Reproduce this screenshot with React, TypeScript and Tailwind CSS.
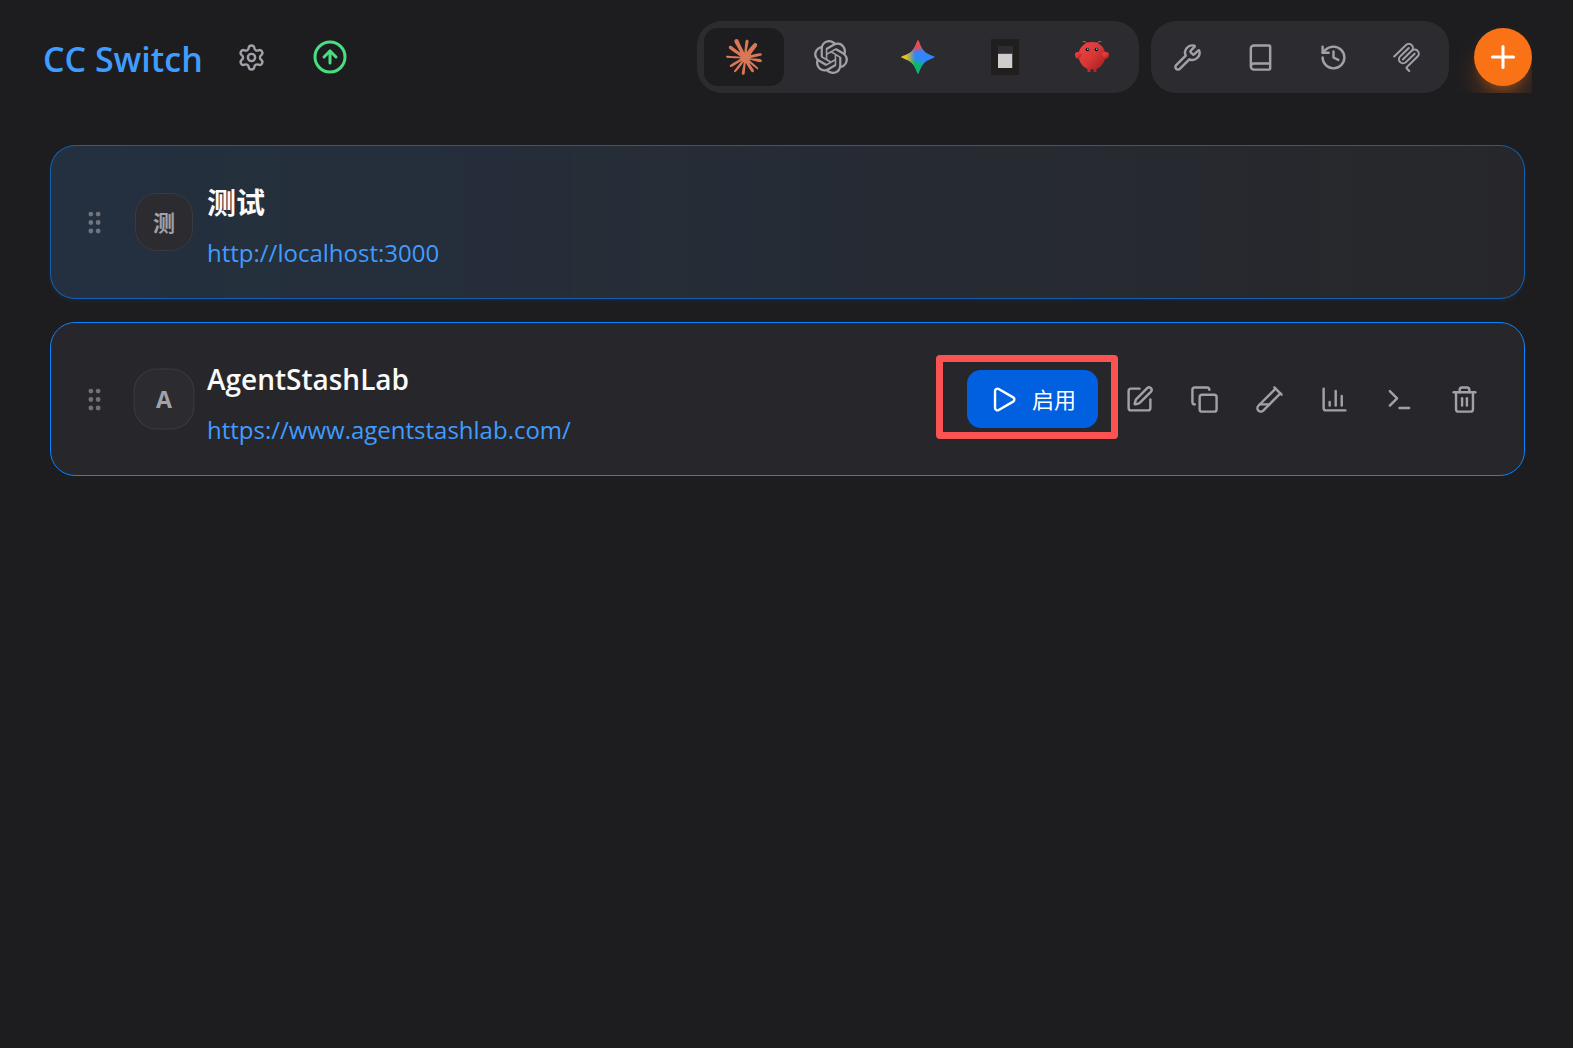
import React, { FC, ReactNode } from "react";
import clsx from "clsx";
import {
  Book,
  ChartColumn,
  CircleArrowUp,
  Copy,
  GripVertical,
  History,
  Play,
  Plus,
  Settings,
  SquarePen,
  Terminal,
  TestTubeDiagonal,
  Trash2,
  Wrench,
} from "lucide-react";
import { SiClaude, SiOpenai } from "react-icons/si";

const GeminiIcon: FC = () => (
  <svg width={34} height={34} viewBox="0 0 24 24">
    <defs>
      <linearGradient id="gem-red" x1="11" y1="0" x2="13" y2="9" gradientUnits="userSpaceOnUse">
        <stop offset="0.45" stopColor="#f94543" />
        <stop offset="1" stopColor="#f94543" stopOpacity="0" />
      </linearGradient>
      <linearGradient id="gem-yellow" x1="0" y1="12" x2="11" y2="12" gradientUnits="userSpaceOnUse">
        <stop offset="0.3" stopColor="#fabc12" />
        <stop offset="0.9" stopColor="#fabc12" stopOpacity="0" />
      </linearGradient>
      <linearGradient id="gem-green" x1="9" y1="23" x2="13" y2="13" gradientUnits="userSpaceOnUse">
        <stop offset="0.5" stopColor="#08b962" />
        <stop offset="1" stopColor="#08b962" stopOpacity="0" />
      </linearGradient>
    </defs>
    {["#3186ff", "url(#gem-green)", "url(#gem-red)", "url(#gem-yellow)"].map((fill) => (
      <path
        key={fill}
        fill={fill}
        d="M12 .2C12.8.2 13.4 4.8 16.300 7.700C19.200 10.600 23.800 11.200 23.800 12S19.200 13.400 16.300 16.300C13.400 19.200 12.800 23.800 12 23.800S10.600 19.200 7.700 16.300C4.800 13.400.2 12.800.2 12S4.800 10.600 7.700 7.700C10.600 4.800 11.200.2 12 .2z"
      />
    ))}
  </svg>
);

const OpenCodeIcon: FC = () => (
  <svg width={28} height={36} viewBox="0 0 28 36">
    <path fill="#211e1e" d="M0 0h28v36H0z" />
    <path fill="#2d2c31" d="M7 7h15v22H7z" />
    <path fill="#4b494d" d="M7 14h15v15H7z" />
    <path fill="#cfcecd" d="M7 15h14v14H7z" />
  </svg>
);

const OpenClawIcon: FC = () => (
  <svg width={36} height={36} viewBox="0 0 120 120" fill="none">
    <defs>
      <linearGradient id="claw" x1="0" y1="0" x2="1" y2="1">
        <stop stopColor="#f04444" />
        <stop offset="0.5" stopColor="#d93636" />
        <stop offset="1" stopColor="#991b1b" />
      </linearGradient>
    </defs>
    <path
      fill="url(#claw)"
      d="M60 10C30 10 15 35 15 55s15 40 30 45v10h10v-10s5 2 10 0v10h10v-10c15-5 30-25 30-45S90 10 60 10z"
    />
    <path fill="url(#claw)" d="M20 45C5 40 0 50 5 60s15 5 20-5c3-7 0-10-5-10z" />
    <path fill="url(#claw)" d="M100 45c15-5 20 5 15 15s-15 5-20-5c-3-7 0-10 5-10z" />
    <path stroke="#ff4d4d" strokeWidth={3} strokeLinecap="round" d="M45 15Q35 5 30 8M75 15q10-10 15-7" />
    <circle cx={45} cy={35} r={6} fill="#050810" />
    <circle cx={75} cy={35} r={6} fill="#050810" />
    <circle cx={46} cy={34} r={3} fill="#00e5cc" />
    <circle cx={76} cy={34} r={3} fill="#00e5cc" />
  </svg>
);

const McpIcon: FC = () => (
  <svg width={29} height={29} viewBox="0 0 24 24" fill="currentColor" fillRule="evenodd">
    <path d="M15.688 2.343a2.588 2.588 0 00-3.61 0l-9.626 9.44a.863.863 0 01-1.203 0 .823.823 0 010-1.18l9.626-9.44a4.313 4.313 0 016.016 0 4.116 4.116 0 011.204 3.54 4.3 4.3 0 013.609 1.18l.05.05a4.115 4.115 0 010 5.9l-8.706 8.537a.274.274 0 000 .393l1.788 1.754a.823.823 0 010 1.18.863.863 0 01-1.203 0l-1.788-1.753a1.92 1.92 0 010-2.754l8.706-8.538a2.47 2.47 0 000-3.54l-.05-.049a2.588 2.588 0 00-3.607-.003l-7.172 7.034-.002.002-.098.097a.863.863 0 01-1.204 0 .823.823 0 010-1.18l7.273-7.133a2.47 2.47 0 00-.003-3.537z" />
    <path d="M14.485 4.703a.823.823 0 000-1.18.863.863 0 00-1.204 0l-7.119 6.982a4.115 4.115 0 000 5.9 4.314 4.314 0 006.016 0l7.12-6.982a.823.823 0 000-1.18.863.863 0 00-1.204 0l-7.119 6.982a2.588 2.588 0 01-3.61 0 2.47 2.47 0 010-3.54l7.12-6.982z" />
  </svg>
);

interface IconButtonProps {
  label: string;
  children: ReactNode;
}

const IconButton: FC<IconButtonProps> = ({ label, children }) => (
  <button
    type="button"
    aria-label={label}
    className="flex h-[58px] w-[58px] shrink-0 items-center justify-center rounded-[14px] text-[#a1a1aa]"
  >
    {children}
  </button>
);

const apps = [
  { name: "Claude", icon: <SiClaude size={36} color="#d97757" /> },
  { name: "Codex", icon: <SiOpenai size={34} /> },
  { name: "Gemini", icon: <GeminiIcon /> },
  { name: "OpenCode", icon: <OpenCodeIcon /> },
  { name: "OpenClaw", icon: <OpenClawIcon /> },
];

const Header: FC = () => {
  return (
    <header className="flex h-[114px] items-center justify-between pl-[43px] pr-[41px]">
      <div className="flex items-center gap-5">
        <h1 className="pt-1 text-[34px] font-semibold leading-[50px] text-[#409cff]">CC Switch</h1>
        <IconButton label="设置">
          <Settings size={29} />
        </IconButton>
        <button
          type="button"
          aria-label="更新"
          className="flex h-[58px] w-[58px] items-center justify-center text-[#4ade80]"
        >
          <CircleArrowUp size={36} />
        </button>
      </div>

      <div className="flex items-center overflow-hidden">
        <div className="flex gap-[7px] rounded-[25px] bg-[#2c2c30] p-[7px]">
          {apps.map((app, i) => (
            <button
              key={app.name}
              type="button"
              aria-label={app.name}
              className={clsx(
                "flex h-[58px] w-20 items-center justify-center rounded-[14px] text-[#a1a1aa]",
                i === 0 && "bg-[#1d1d20]"
              )}
            >
              {app.icon}
            </button>
          ))}
        </div>
        <div className="ml-3 flex gap-[15px] rounded-[25px] bg-[#2c2c30] py-[7px] pl-[7px] pr-3.5">
          <IconButton label="Skills">
            <Wrench size={29} />
          </IconButton>
          <IconButton label="提示词">
            <Book size={29} />
          </IconButton>
          <IconButton label="会话">
            <History size={29} />
          </IconButton>
          <IconButton label="MCP">
            <McpIcon />
          </IconButton>
        </div>
        <button
          type="button"
          aria-label="添加"
          className="ml-[25px] flex h-[58px] w-[58px] items-center justify-center rounded-full bg-[#f97316] text-white shadow-[0_18px_27px_-5px_rgba(249,115,22,0.4),0_7px_11px_-7px_rgba(249,115,22,0.4)]"
        >
          <Plus size={36} />
        </button>
      </div>
    </header>
  );
};

interface ProviderCardProps {
  name: string;
  url: string;
  current?: boolean;
  hovered?: boolean;
}

const ProviderCard: FC<ProviderCardProps> = ({ name, url, current, hovered }) => {
  return (
    <li
      className={clsx(
        "flex h-[154px] items-center rounded-[25px] border bg-[#27272b] pl-[29px] pr-[31px]",
        current &&
          "border-[#0a84ff]/60 bg-linear-to-r from-[#0a84ff]/10 to-transparent shadow-[0_2px_4px_rgba(10,132,255,0.1)]",
        hovered && "border-[#0a84ff]"
      )}
    >
      <button type="button" aria-label="拖动" className="text-[#a1a1aa]/60">
        <GripVertical size={29} />
      </button>
      <div
        className={clsx(
          "ml-[26px] flex h-[58px] w-[58px] shrink-0 items-center justify-center rounded-[22px] border border-[#3a3a40] bg-[#2c2c30] text-[22px] font-bold leading-[32px] text-[#a1a1aa]",
          hovered && "scale-105"
        )}
      >
        {name[0]}
      </div>
      <div className="ml-[14px] flex flex-1 flex-col items-start gap-[11px] pt-[7px]">
        <h3
          className={clsx(
            "leading-[43px] text-[#fafafa]",
            current ? "text-[29px] font-bold" : "text-[28px] font-semibold"
          )}
        >
          {name}
        </h3>
        <a href={url} className="text-2xl leading-[36px] text-[#409cff]">
          {url}
        </a>
      </div>
      {hovered && (
        <div className="flex items-center gap-3">
          <div className="relative">
            <button
              type="button"
              className="flex h-[58px] w-[131px] items-center justify-center gap-[14px] rounded-[14px] bg-[#0060df] text-[22px] text-white"
            >
              <Play size={29} />
              启用
            </button>
            <div className="pointer-events-none absolute -bottom-[11px] -left-[31px] -right-5 -top-[15px] rounded border-[7px] border-[#fb5252]" />
          </div>
          <div className="flex gap-[7px]">
            <IconButton label="编辑">
              <SquarePen size={29} />
            </IconButton>
            <IconButton label="复制">
              <Copy size={29} />
            </IconButton>
            <IconButton label="测试模型">
              <TestTubeDiagonal size={29} />
            </IconButton>
            <IconButton label="用量">
              <ChartColumn size={29} />
            </IconButton>
            <IconButton label="终端">
              <Terminal size={29} />
            </IconButton>
            <IconButton label="删除">
              <Trash2 size={29} />
            </IconButton>
          </div>
        </div>
      )}
    </li>
  );
};

const App: FC = () => {
  return (
    <div className="min-h-screen bg-[#1d1d20] font-['Open_Sans','Noto_Sans_CJK_SC',sans-serif]">
      <Header />
      <main className="pl-[50px] pr-12 pt-[31px]">
        <ul className="flex flex-col gap-[23px]">
          <ProviderCard name="测试" url="http://localhost:3000" current />
          <ProviderCard name="AgentStashLab" url="https://www.agentstashlab.com/" hovered />
        </ul>
      </main>
    </div>
  );
};

export default App;
